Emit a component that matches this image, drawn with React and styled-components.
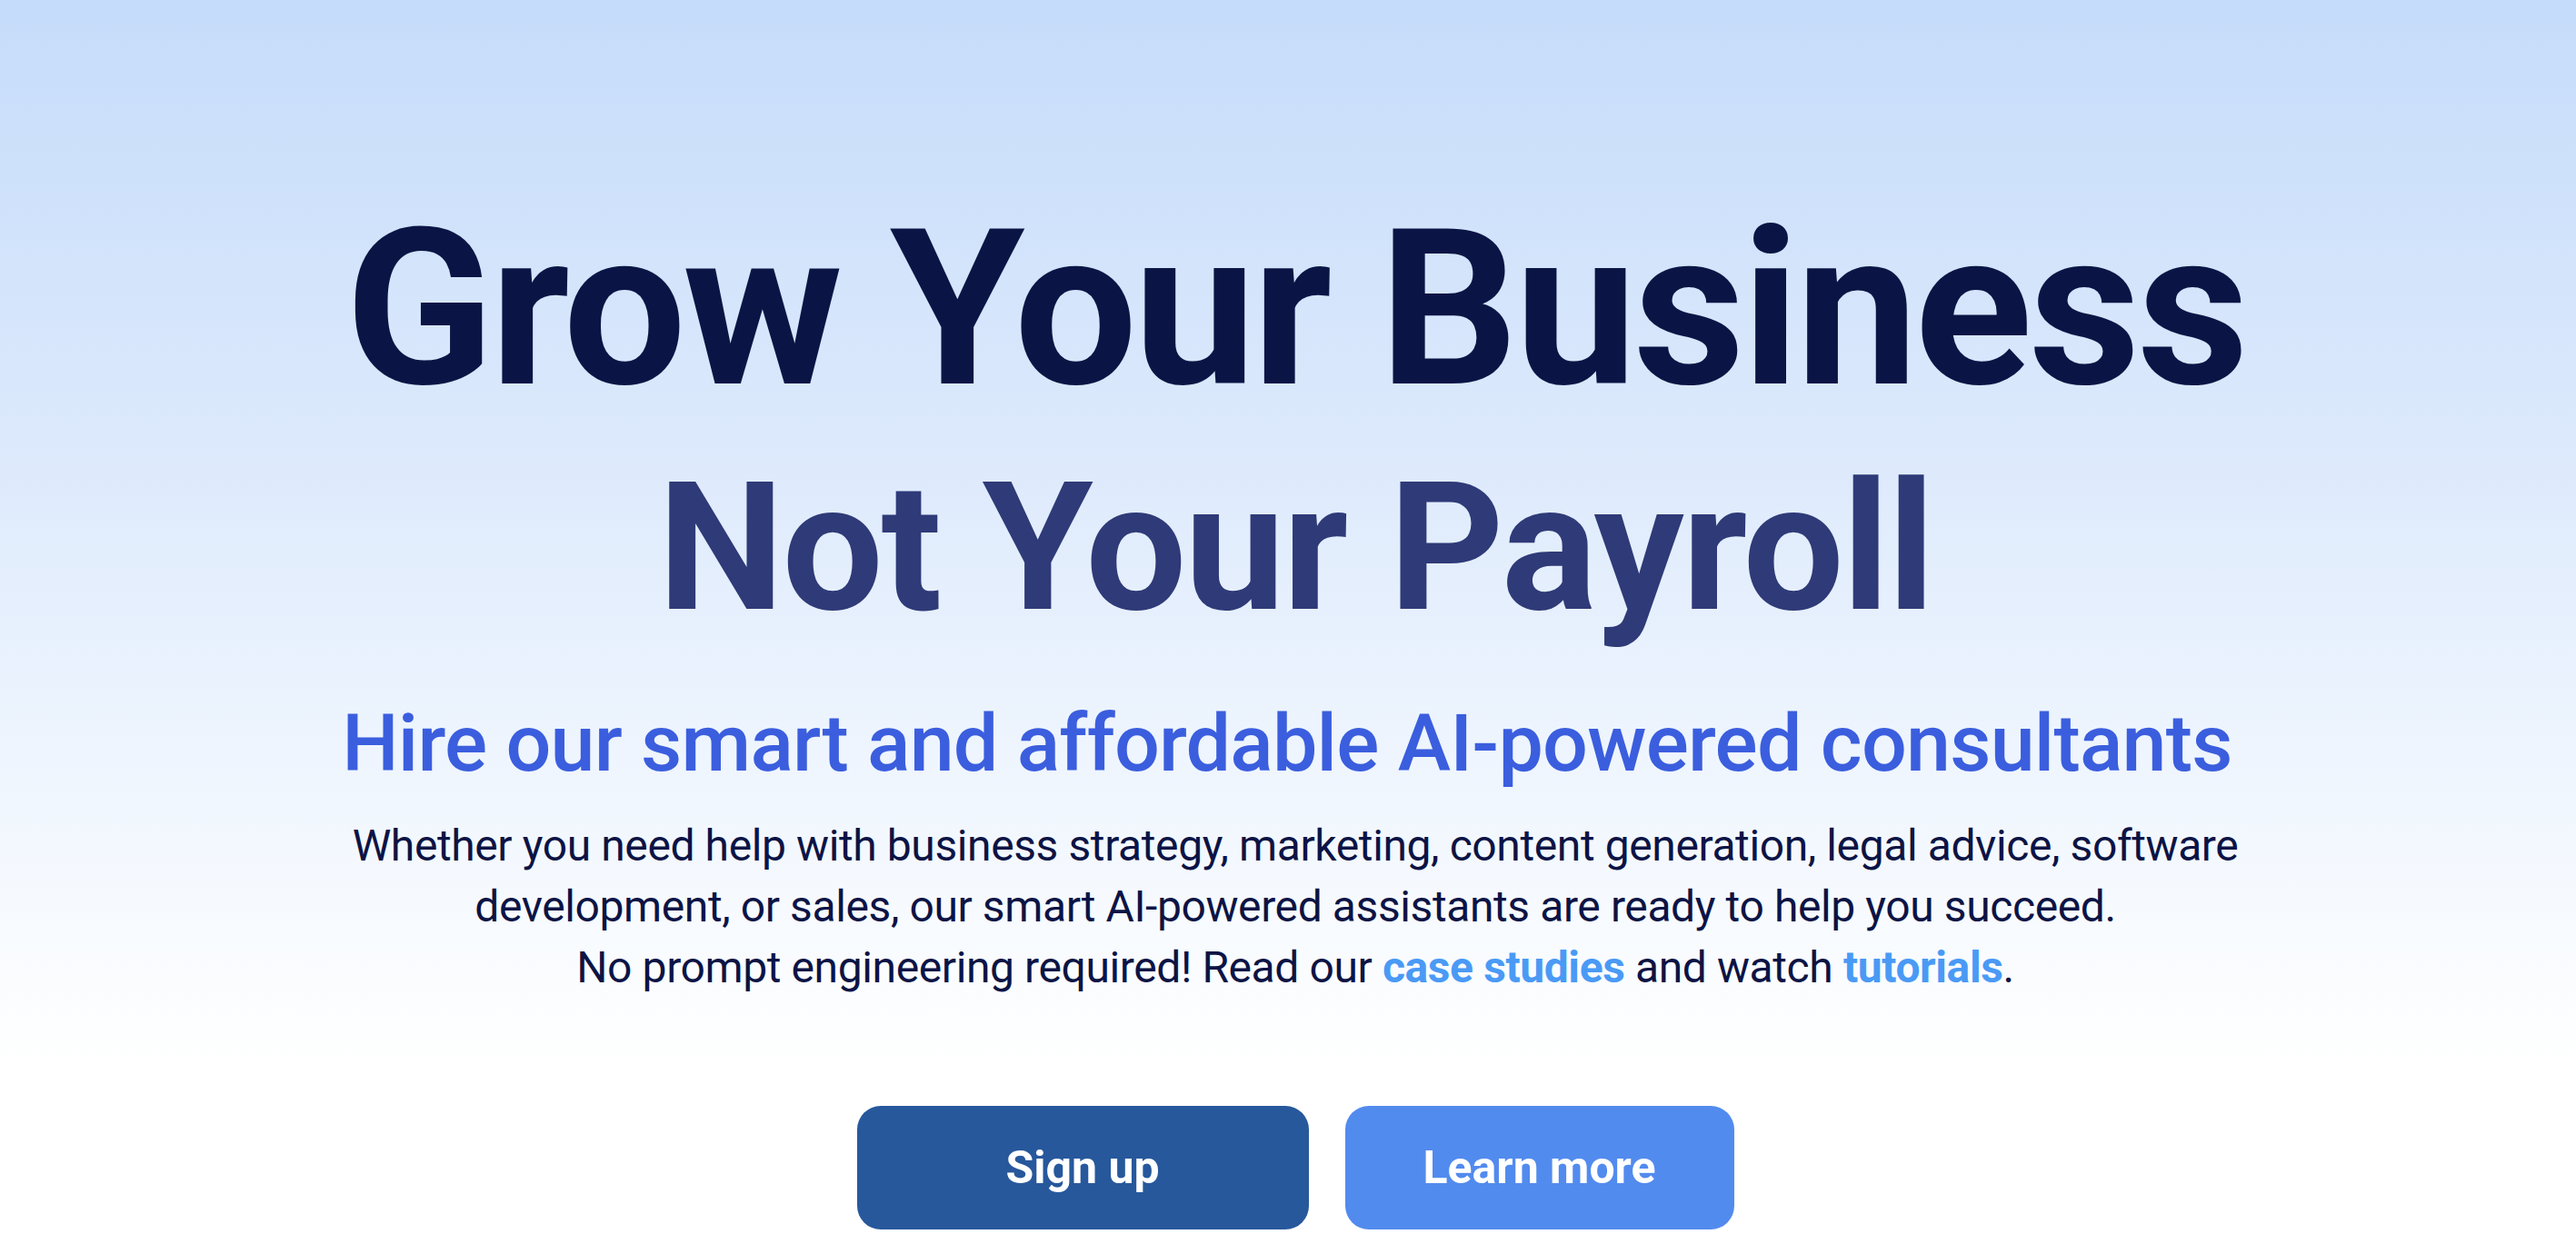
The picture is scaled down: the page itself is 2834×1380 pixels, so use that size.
import React from 'react';
import styled, { createGlobalStyle } from 'styled-components';

const GlobalStyle = createGlobalStyle`
  html, body {
    margin: 0;
    padding: 0;
  }
  body {
    font-family: Roboto, "Liberation Sans", sans-serif;
    background: #ffffff;
  }
`;

const Hero = styled.section`
  min-height: 1380px;
  box-sizing: border-box;
  padding: 220px 0 0 16px;
  display: flex;
  flex-direction: column;
  align-items: center;
  text-align: center;
  background: linear-gradient(180deg, #c5dcfa 0%, #dce9fc 35%, #eef5fe 60%, #ffffff 85%);
`;

const Title = styled.h1`
  margin: 0;
  font-size: 240px;
  line-height: 1;
  font-weight: 700;
  letter-spacing: -4px;
  color: #0b1545;
`;

const SubTitle = styled.h2`
  margin: 44px 0 0;
  font-size: 197px;
  line-height: 1;
  font-weight: 700;
  letter-spacing: -2.2px;
  color: #2f3a78;
`;

const Tagline = styled.h3`
  margin: 73px 0 0 -18px;
  font-size: 88px;
  line-height: 1;
  font-weight: 500;
  letter-spacing: -0.8px;
  color: #3b5ede;
`;

const Body = styled.p`
  margin: 35px 0 0;
  font-size: 48px;
  line-height: 67px;
  font-weight: 400;
  letter-spacing: -0.4px;
  color: #0c1445;
`;

const Link = styled.a`
  color: #4a9af5;
  font-weight: 700;
  text-decoration: none;
`;

const Actions = styled.div`
  margin-top: 119px;
  display: flex;
  gap: 40px;
`;

const Button = styled.button`
  width: ${p => p.width}px;
  height: 136px;
  border: none;
  border-radius: 26px;
  background: ${p => (p.primary ? '#27589c' : '#528bee')};
  color: #ffffff;
  font-family: Roboto, "Liberation Sans", sans-serif;
  font-size: 50px;
  font-weight: 700;
  cursor: pointer;
`;

export default function App() {
  return (
    <>
      <GlobalStyle />
      <Hero>
        <Title>Grow Your Business</Title>
        <SubTitle>Not Your Payroll</SubTitle>
        <Tagline>Hire our smart and affordable AI-powered consultants</Tagline>
        <Body>
          Whether you need help with business strategy, marketing, content generation, legal advice, software
          <br />
          development, or sales, our smart AI-powered assistants are ready to help you succeed.
          <br />
          No prompt engineering required! Read our <Link href="#">case studies</Link> and watch{' '}
          <Link href="#">tutorials</Link>.
        </Body>
        <Actions>
          <Button primary width={497}>Sign up</Button>
          <Button width={428}>Learn more</Button>
        </Actions>
      </Hero>
    </>
  );
}
